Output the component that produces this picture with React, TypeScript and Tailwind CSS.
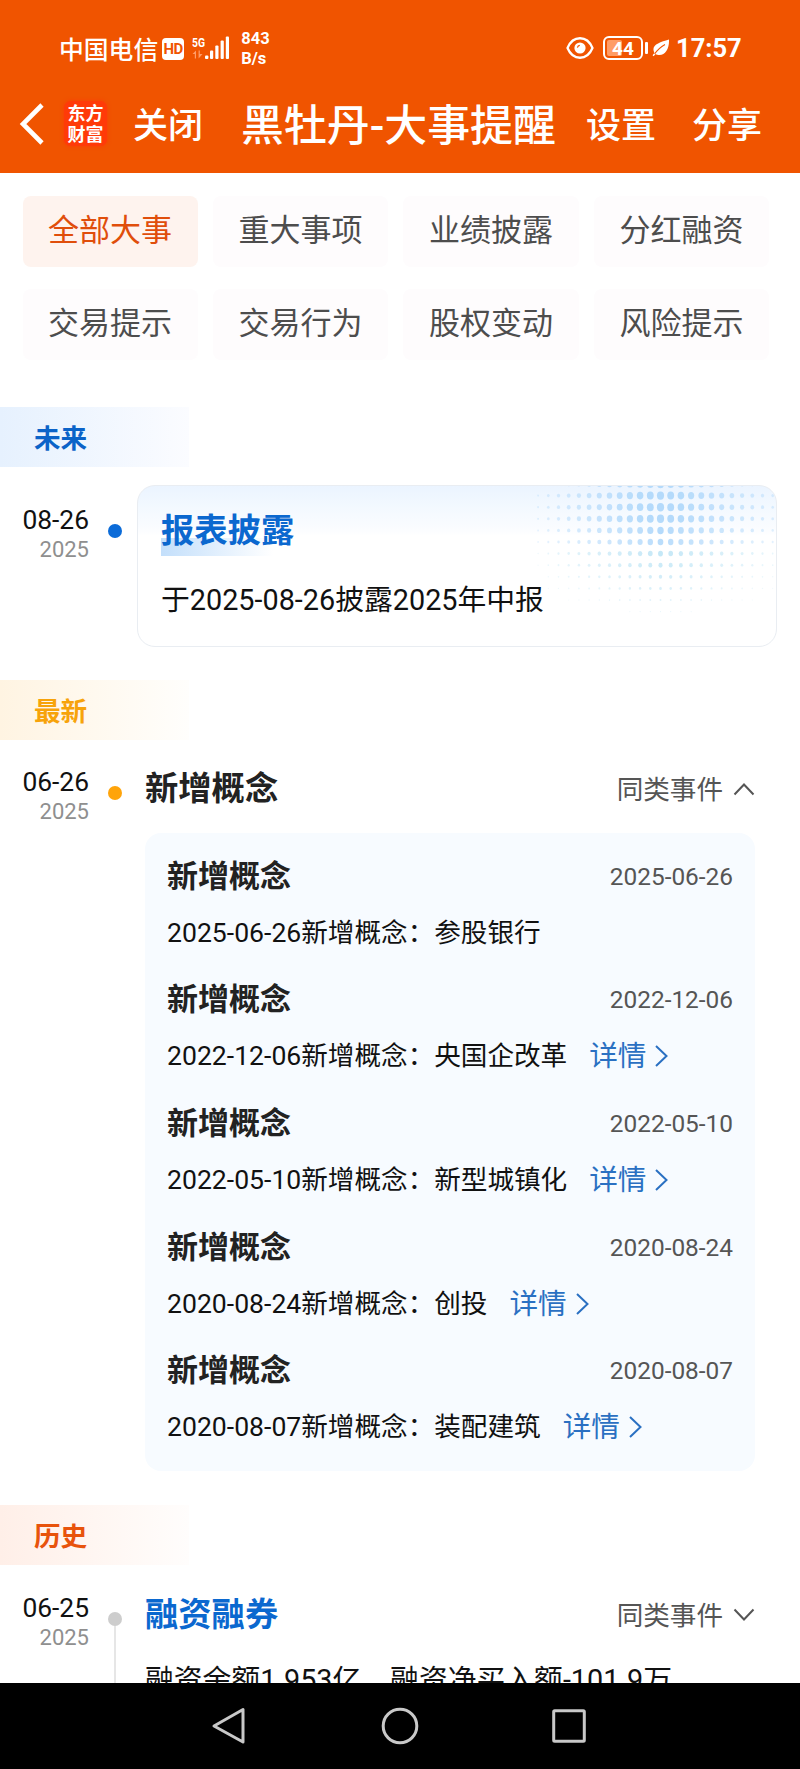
import type { ReactNode } from "react";

const TABS = ["全部大事", "重大事项", "业绩披露", "分红融资", "交易提示", "交易行为", "股权变动", "风险提示"];

const CONCEPTS = [
  { date: "2025-06-26", name: "参股银行", link: false },
  { date: "2022-12-06", name: "央国企改革", link: true },
  { date: "2022-05-10", name: "新型城镇化", link: true },
  { date: "2020-08-24", name: "创投", link: true },
  { date: "2020-08-07", name: "装配建筑", link: true },
];

function StatusBar() {
  return (
    <div className="flex h-[74px] items-end pl-[59px] pr-[57px] text-white">
      <div className="flex h-[50px] items-center">
        <span className="pt-[3px] text-[24.8px] font-medium leading-[50px]">中国电信</span>
        <span className="ml-[4px] flex h-[22px] w-[22px] items-center justify-center rounded-[4px] bg-white text-[15px] font-bold leading-none tracking-[-0.5px] text-[#f05400]">
          HD
        </span>
        <svg className="ml-[8px]" width="38" height="34" viewBox="0 -4 38 34" fill="#fff">
          <text x="0" y="10.5" fontSize="13.5" fontWeight="700" textLength="13" lengthAdjust="spacingAndGlyphs">5G</text>
          <g fill="#ff9d68">
            <path d="M0.5 18 L4 14.5 V22.5 H2.8 V18 Z" />
            <path d="M6.6 14.5 H7.8 V18 H10.5 L6.6 22.5 Z" />
          </g>
          <rect x="13" y="19.5" width="3.4" height="3.5" rx="1" />
          <rect x="18" y="14.5" width="3.2" height="8.5" rx="1" />
          <rect x="23.3" y="9.5" width="3.2" height="13.5" rx="1" />
          <rect x="28.6" y="4.5" width="3.2" height="18.5" rx="1" />
          <rect x="33.8" y="0.5" width="3.2" height="22.5" rx="1" />
        </svg>
        <div className="ml-[11px] text-[16.5px] font-bold leading-[20px]">
          <div>843</div>
          <div>B/s</div>
        </div>
      </div>
      <div className="ml-auto flex h-[50px] items-center pb-[2px]">
        <svg width="28" height="24" viewBox="0 0 28 24" fill="none" stroke="#fff" strokeWidth="2.3">
          <path d="M1.5 12 C7 -1 21 -1 26.5 12 C21 25 7 25 1.5 12 Z" strokeLinejoin="round" />
          <circle cx="14" cy="12" r="5.6" fill="#fff" stroke="none" />
          <path d="M11.4 11.6 A2.9 2.9 0 0 1 13.8 9.4" stroke="#f05400" strokeWidth="1.2" />
        </svg>
        <span className="ml-[9px] flex h-[24px] w-[40px] items-center rounded-[6px] border-[2px] border-white p-[2px]">
          <span className="flex h-[16px] w-[15px] items-center overflow-visible rounded-[2px] bg-[#ff9c66]">
            <span className="pl-[5px] text-[19px] font-bold leading-none">44</span>
          </span>
        </span>
        <span className="ml-[2px] h-[12px] w-[3px] rounded-[1px] bg-white" />
        <svg className="ml-[4px]" width="18" height="18" viewBox="0 0 18 18">
          <path d="M17 0.5 C17.5 9 13.5 16 7.5 16 C6 16 4.5 15.6 3.6 15 L1.6 17.2 L0.6 16.2 L2.4 14 C-1.5 6 7 3.5 17 0.5 Z" fill="#fff" />
          <path d="M2.6 15 C5.5 10.5 8.5 8 13 5.4" fill="none" stroke="#f05400" strokeWidth="1.1" />
        </svg>
        <span className="ml-[6px] w-[67px] text-[25.5px] font-bold leading-[50px]">17:57</span>
      </div>
    </div>
  );
}

function NavBar() {
  return (
    <div className="flex h-[99px] items-center text-white">
      <svg className="ml-[19px]" width="26" height="42" viewBox="0 0 26 42" fill="none" stroke="#fff" strokeWidth="4.6">
        <path d="M23 2 L4 21 L23 40" />
      </svg>
      <div className="ml-[19px] flex h-[45px] w-[43px] flex-col items-center justify-center rounded-[7px] bg-[#ff3a08] text-[18px] font-bold leading-[21px] shadow-[0_0_4px_#ff3a08]">
        <span>东方</span>
        <span>财富</span>
      </div>
      <span className="ml-[26px] pt-[6px] text-[35px] font-medium leading-[50px]">关闭</span>
      <span className="ml-[38px] w-[317px] whitespace-nowrap pt-[5px] text-[42.9px] font-medium leading-[50px]">黑牡丹-大事提醒</span>
      <span className="ml-[28px] pt-[6px] text-[35px] font-medium leading-[50px]">设置</span>
      <span className="ml-[36px] pt-[6px] text-[35px] font-medium leading-[50px]">分享</span>
    </div>
  );
}

function SectionLabel({ className, children }: { className: string; children: ReactNode }) {
  return (
    <div className={`flex h-[60px] w-[189px] items-center bg-linear-to-r pl-[34px] pt-[3px] text-[26.6px] font-bold ${className}`}>
      {children}
    </div>
  );
}

function DateColumn({ day, dot, line }: { day: string; dot: string; line?: boolean }) {
  return (
    <>
      <div className="w-[89px] shrink-0 text-right">
        <div className="text-[26.4px] leading-[33px] text-[#111]">{day}</div>
        <div className="text-[22px] leading-[26px] text-[#8f8f8f]">2025</div>
      </div>
      <div className="ml-[19px] flex w-[14px] shrink-0 flex-col items-center pt-[20px]">
        <span className={`size-[14px] shrink-0 rounded-full ${dot}`} />
        {line && <span className="w-[2px] grow bg-[#e6e6e6]" />}
      </div>
    </>
  );
}

function Chevron({ up }: { up?: boolean }) {
  return (
    <svg className="ml-[10px]" width="22" height="14" viewBox="0 0 22 14" fill="none" stroke="#555" strokeWidth="2">
      <path d={up ? "M1.5 12.5 L11 2.5 L20.5 12.5" : "M1.5 1.5 L11 11.5 L20.5 1.5"} />
    </svg>
  );
}

function EventHeading({ title, color, up }: { title: string; color: string; up?: boolean }) {
  return (
    <div className="flex h-[45px] items-center pt-[1px]">
      <span className={`text-[33.3px] font-bold leading-[44px] ${color}`}>{title}</span>
      <span className="ml-auto pt-[1px] text-[26.6px] leading-[44px] text-[#555]">同类事件</span>
      <Chevron up={up} />
    </div>
  );
}

function Halftone() {
  const dots: ReactNode[] = [];
  for (let row = 0; row < 12; row++) {
    for (let col = -12; col <= 11; col++) {
      const fallX = 1 - Math.abs(col) / 13.5;
      const fallY = row < 4 ? 1 : 1 - (row - 3) / 9.5;
      const r = 3.9 * Math.pow(fallX, 0.6) * fallY;
      if (r < 0.5) continue;
      dots.push(
        <ellipse
          key={`${row}:${col}`}
          cx={132.5 + col * 10.2}
          cy={-2 + row * 11.6}
          rx={r * 0.92}
          ry={r * 1.08}
          fill={row < 6 ? "#b4dafb" : "#b9e3f5"}
          opacity={Math.min(1, (0.3 + fallX * 0.8) * (0.2 + fallY * 0.8))}
        />,
      );
    }
  }
  return (
    <svg className="absolute right-0 top-0" width="248" height="140" viewBox="0 0 248 140">
      {dots}
    </svg>
  );
}

function ReportCard() {
  return (
    <div className="relative ml-[15px] h-[162px] w-[640px] overflow-hidden rounded-[18px] border border-[#e9edf2] bg-[linear-gradient(to_bottom,#ebf4ff_0px,#f3f9ff_22px,#fafcff_42px,#fff_50px)] pl-[23px] pt-[20px]">
      <Halftone />
      <div className="relative h-[50px] pt-[2px]">
        <span className="absolute bottom-0 left-0 h-[18px] w-[112px] bg-linear-to-r from-[#c3dffb] to-white/0" />
        <span className="relative text-[33.3px] font-bold leading-[46px] text-[#0b68cf]">报表披露</span>
      </div>
      <div className="relative mt-[23px] text-[28.8px] leading-[42px] text-[#111]">于2025-08-26披露2025年中报</div>
    </div>
  );
}

function ConceptItem({ date, name, link }: { date: string; name: string; link: boolean }) {
  return (
    <div className="h-[123.7px]">
      <div className="flex h-[44px] items-center">
        <span className="text-[31px] font-bold leading-[44px] text-[#222]">新增概念</span>
        <span className="ml-auto text-[24.4px] leading-[44px] text-[#555]">{date}</span>
      </div>
      <div className="mt-[12px] flex h-[44px] items-center">
        <span className="text-[26.6px] leading-[44px] text-[#111]">
          {date}新增概念：{name}
        </span>
        {link && (
          <span className="ml-[22px] flex items-center text-[28.6px] leading-[44px] text-[#2a70c2]">
            详情
            <svg className="ml-[8px]" width="15" height="24" viewBox="0 0 15 24" fill="none" stroke="#2a70c2" strokeWidth="2">
              <path d="M2 2 L12.5 12 L2 22" />
            </svg>
          </span>
        )}
      </div>
    </div>
  );
}

export default function App() {
  return (
    <div className="flex h-[1769px] w-[800px] flex-col overflow-hidden bg-white font-['Roboto','Noto_Sans_CJK_SC',sans-serif]" lang="zh-CN">
      <header className="h-[173px] shrink-0 bg-[#f05400]">
        <StatusBar />
        <NavBar />
      </header>

      <main className="flex min-h-0 flex-1 flex-col overflow-hidden">
        <div className="grid shrink-0 grid-cols-4 gap-x-[15.3px] gap-y-[22px] pl-[22.5px] pr-[31px] pt-[23px]">
          {TABS.map((tab, i) => (
            <div
              key={tab}
              className={`flex h-[71px] items-center justify-center rounded-[8px] pb-[1px] text-[31px] ${
                i === 0 ? "bg-[#fef3ee] text-[#e04e0b]" : "bg-[#fefcfd] text-[#4d4d4d]"
              }`}
            >
              {tab}
            </div>
          ))}
        </div>

        <div className="mt-[47px] shrink-0">
          <SectionLabel className="from-[#e6f1fe] to-[#fbfcff] text-[#0b63c8]">未来</SectionLabel>
        </div>
        <div className="mt-[18px] flex shrink-0">
          <div className="flex pt-[19px]">
            <DateColumn day="08-26" dot="bg-[#0b6bd8]" />
          </div>
          <ReportCard />
        </div>

        <div className="mt-[33px] shrink-0">
          <SectionLabel className="from-[#fff4e2] to-[#fffefc] text-[#f7a30a]">最新</SectionLabel>
        </div>
        <div className="mt-[26px] flex shrink-0">
          <DateColumn day="06-26" dot="bg-[#ffa40a]" />
          <div className="ml-[23px] w-[610px]">
            <EventHeading title="新增概念" color="text-[#222]" up />
            <div className="mt-[22px] h-[638px] rounded-[16px] bg-[#f7fbff] px-[22px] pt-[21.5px]">
              {CONCEPTS.map((c) => (
                <ConceptItem key={c.date} {...c} />
              ))}
            </div>
          </div>
        </div>

        <div className="mt-[34px] shrink-0">
          <SectionLabel className="from-[#ffefe8] to-[#fffdfc] text-[#e8530c]">历史</SectionLabel>
        </div>
        <div className="mt-[27px] flex h-[120px] shrink-0">
          <DateColumn day="06-25" dot="bg-[#cdcdcd]" line />
          <div className="ml-[23px] w-[610px]">
            <EventHeading title="融资融券" color="text-[#0b68cf]" />
            <div className="mt-[22px] whitespace-nowrap text-[28.8px] leading-[42px] text-[#111]">
              融资余额1.953亿，融资净买入额-101.9万
            </div>
          </div>
        </div>
      </main>

      <nav className="flex h-[86px] shrink-0 items-center bg-black">
        <svg className="ml-[210px]" width="38" height="40" viewBox="0 0 38 40" fill="none" stroke="#c8c8c8" strokeWidth="3">
          <path d="M33 3.5 V36 L4 20 Z" strokeLinejoin="round" />
        </svg>
        <svg className="ml-[132px]" width="40" height="40" viewBox="0 0 40 40" fill="none" stroke="#c8c8c8" strokeWidth="3">
          <circle cx="20" cy="20" r="16.8" />
        </svg>
        <svg className="ml-[129px]" width="40" height="40" viewBox="0 0 40 40" fill="none" stroke="#c8c8c8" strokeWidth="3">
          <rect x="4.7" y="4.7" width="30.6" height="30.6" rx="1" />
        </svg>
      </nav>
    </div>
  );
}
